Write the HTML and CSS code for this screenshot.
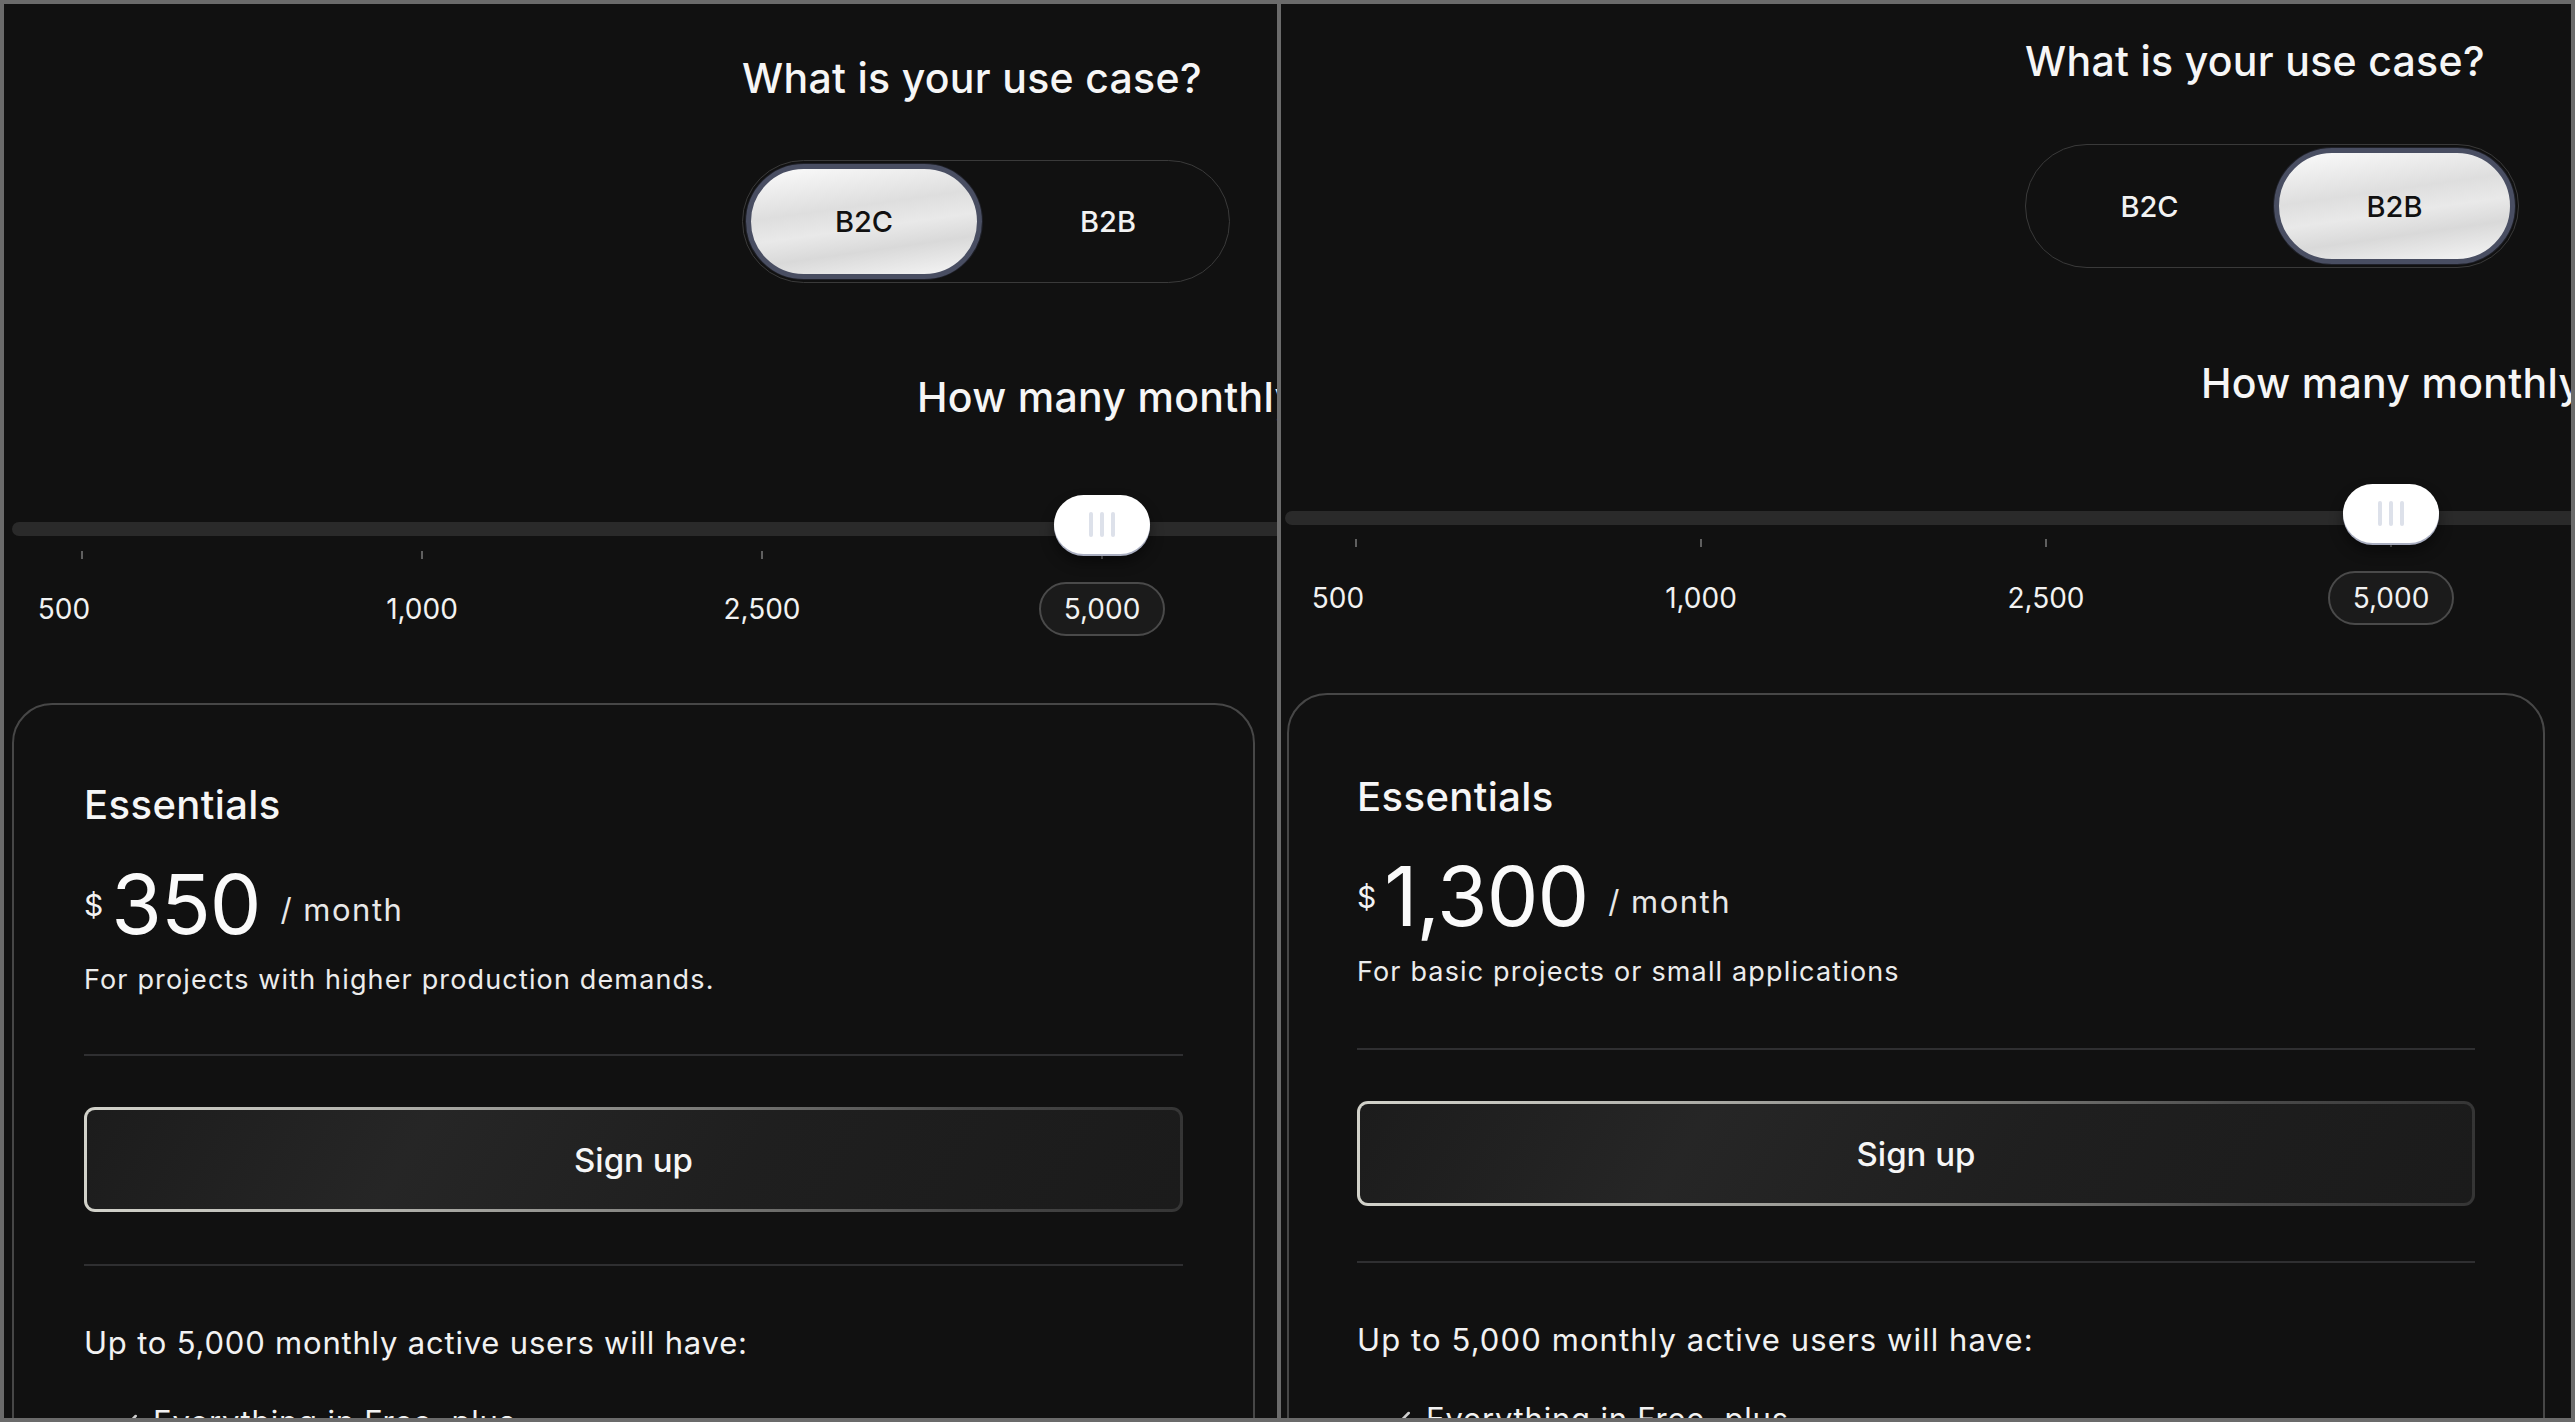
FILE: index.html
```html
<!DOCTYPE html>
<html lang="en">
<head>
<meta charset="utf-8">
<title>Pricing</title>
<link rel="stylesheet" href="styles.css">
</head>
<body>
<div class="frame">
  <section class="panel panel-b2c">
    <h2 class="question">What is your use case?</h2>
    <div class="toggle">
      <button class="seg is-active">B2C</button>
      <button class="seg">B2B</button>
    </div>
    <h2 class="question question-mau">How many monthly active users do you have?</h2>
    <div class="slider">
      <div class="track">
        <div class="thumb"><span></span><span></span><span></span></div>
      </div>
      <div class="ticks"><i></i><i></i><i></i><i></i><i></i></div>
      <div class="labels">
        <span class="lbl lbl-first">500</span>
        <span class="lbl">1,000</span>
        <span class="lbl">2,500</span>
        <span class="lbl lbl-current">5,000</span>
        <span class="lbl">10,000</span>
      </div>
    </div>
    <article class="card">
      <h3 class="plan">Essentials</h3>
      <div class="price">
        <span class="cur">$</span>
        <span class="amount">350</span>
        <span class="per">/ month</span>
      </div>
      <p class="desc">For projects with higher production demands.</p>
      <hr class="rule">
      <button class="signup">Sign up</button>
      <hr class="rule rule-2">
      <p class="includes">Up to 5,000 monthly active users will have:</p>
      <ul class="features">
        <li><svg class="check" viewBox="0 0 24 24"><path d="M4 12.5l5 5L20 6.5"/></svg>Everything in Free, plus</li>
        <li><svg class="check" viewBox="0 0 24 24"><path d="M4 12.5l5 5L20 6.5"/></svg>Custom domain</li>
      </ul>
    </article>
  </section>

  <section class="panel panel-b2b">
    <h2 class="question">What is your use case?</h2>
    <div class="toggle">
      <button class="seg">B2C</button>
      <button class="seg is-active">B2B</button>
    </div>
    <h2 class="question question-mau">How many monthly active users do you have?</h2>
    <div class="slider">
      <div class="track">
        <div class="thumb"><span></span><span></span><span></span></div>
      </div>
      <div class="ticks"><i></i><i></i><i></i><i></i><i></i></div>
      <div class="labels">
        <span class="lbl lbl-first">500</span>
        <span class="lbl">1,000</span>
        <span class="lbl">2,500</span>
        <span class="lbl lbl-current">5,000</span>
        <span class="lbl">10,000</span>
      </div>
    </div>
    <article class="card">
      <h3 class="plan">Essentials</h3>
      <div class="price">
        <span class="cur">$</span>
        <span class="amount">1,300</span>
        <span class="per">/ month</span>
      </div>
      <p class="desc">For basic projects or small applications</p>
      <hr class="rule">
      <button class="signup">Sign up</button>
      <hr class="rule rule-2">
      <p class="includes">Up to 5,000 monthly active users will have:</p>
      <ul class="features">
        <li><svg class="check" viewBox="0 0 24 24"><path d="M4 12.5l5 5L20 6.5"/></svg>Everything in Free, plus</li>
        <li><svg class="check" viewBox="0 0 24 24"><path d="M4 12.5l5 5L20 6.5"/></svg>Custom domain</li>
      </ul>
    </article>
  </section>
</div>
</body>
</html>
```

FILE: styles.css
```css
* { box-sizing: border-box; }

html, body {
  margin: 0;
  padding: 0;
  background: #6b6b6b;
}

body {
  font-family: Inter, "Liberation Sans", sans-serif;
  color: #f4f4f4;
}

.frame {
  display: flex;
  gap: 4px;
  padding: 4px;
  width: 2575px;
  height: 1422px;
}

.panel {
  position: relative;
  background: #111111;
  overflow: hidden;
  height: 100%;
  padding-top: var(--top);
}

.panel-b2c {
  flex: 0 0 1273px;
  --top: 49px;
  --q-left: 738px;
  --seg-w: 236px;
  --seg-h: 115px;
  --seg-gap: 8px;
  --g-toggle: 57px;
  --g-mau: 89px;
  --mau-left: 913px;
  --g-slider: 100px;
  --track-left: 8px;
  --t0: 70px;
  --step: 340px;
  --g-ticks: 15px;
  --g-labels: 23px;
  --g-card: 67px;
  --card-left: 8px;
  --card-w: 1243px;
  --card-pad: 70px;
  --card-top: 76px;
  --g-rule: 57px;
  --g-rule2: 52px;
  --inc-ls: 0.8px;
}

.panel-b2b {
  flex: 1 1 auto;
  --top: 32px;
  --q-left: 744px;
  --seg-w: 241px;
  --seg-h: 116px;
  --seg-gap: 4px;
  --g-toggle: 58px;
  --g-mau: 90px;
  --mau-left: 920px;
  --g-slider: 103px;
  --track-left: 4px;
  --t0: 71px;
  --step: 345px;
  --g-ticks: 14px;
  --g-labels: 24px;
  --g-card: 68px;
  --card-left: 6px;
  --card-w: 1258px;
  --card-pad: 68px;
  --card-top: 78px;
  --g-rule: 59px;
  --g-rule2: 55px;
  --inc-ls: 1.1px;
}

.question {
  margin: 0 0 0 var(--q-left);
  font-size: 41px;
  line-height: 50px;
  font-weight: 500;
  letter-spacing: 0.3px;
  white-space: nowrap;
  color: #f6f6f6;
}

.question-mau {
  margin-left: var(--mau-left);
  margin-top: var(--g-mau);
}

/* toggle */
.toggle {
  display: inline-flex;
  gap: var(--seg-gap);
  margin: var(--g-toggle) 0 0 var(--q-left);
  padding: 3px;
  border: 1px solid #3a3a3a;
  border-radius: 80px;
}

.seg {
  width: var(--seg-w);
  height: var(--seg-h);
  border: 5px solid transparent;
  border-radius: 70px;
  background: transparent;
  font-family: Inter, "Liberation Sans", sans-serif;
  font-size: 29px;
  font-weight: 500;
  color: #f2f2f2;
  padding: 0;
}

.seg.is-active {
  color: #111;
  border-color: #494e62;
  box-shadow: 0 0 0 1px #1f2028;
  background: linear-gradient(172deg, #fbfbfb 0%, #dedede 38%, #e9e9e9 55%, #d9d9d9 72%, #f6f6f6 100%);
}

/* slider */
.slider {
  margin: var(--g-slider) 0 0 var(--track-left);
  width: 2400px;
}

.track {
  position: relative;
  height: 14px;
  border-radius: 7px;
  background: #2a2a2a;
}

.thumb {
  position: absolute;
  top: -27px;
  left: calc(var(--t0) + 3 * var(--step) - 48px);
  width: 96px;
  height: 59px;
  border-radius: 30px;
  background: #ffffff;
  box-shadow: 0 2px 0 #a9aec0, 0 8px 14px rgba(0, 0, 0, 0.45);
  display: flex;
  align-items: center;
  justify-content: center;
  gap: 7px;
}

.thumb span {
  width: 4px;
  height: 25px;
  border-radius: 2px;
  background: #dde1ea;
}

.ticks {
  display: flex;
  gap: calc(var(--step) - 2px);
  margin-top: var(--g-ticks);
  padding-left: calc(var(--t0) - 1px);
}

.ticks i {
  width: 2px;
  height: 8px;
  background: #5f5f5f;
}

.labels {
  display: grid;
  grid-template-columns: repeat(5, var(--step));
  justify-items: center;
  align-items: center;
  height: 54px;
  margin: var(--g-labels) 0 0 calc(var(--t0) - var(--step) / 2);
}

.lbl {
  font-size: 28px;
  line-height: 34px;
  color: #f2f2f2;
}

.lbl-first {
  margin-right: 36px;
}

.lbl-current {
  height: 54px;
  line-height: 50px;
  padding: 0 23px;
  border: 2px solid #4a4a4a;
  border-radius: 27px;
  background: #1b1b1b;
}

/* card */
.card {
  margin: var(--g-card) 0 0 var(--card-left);
  width: var(--card-w);
  padding: var(--card-top) var(--card-pad) 0;
  border: 2px solid #474747;
  border-radius: 40px;
  height: 1000px;
}

.plan {
  margin: 0;
  font-size: 40px;
  line-height: 48px;
  font-weight: 500;
  letter-spacing: 0.4px;
  color: #f6f6f6;
}

.price {
  display: flex;
  align-items: center;
  height: 82px;
  margin-top: 35px;
}

.cur {
  font-size: 30px;
  line-height: 1;
  color: #f2f2f2;
}

.amount {
  margin-left: 8px;
  font-size: 82px;
  line-height: 82px;
  font-weight: 400;
  letter-spacing: -1px;
  color: #fafafa;
}

.per {
  margin: 8px 0 0 20px;
  font-size: 31px;
  line-height: 1;
  letter-spacing: 1.5px;
  color: #e8e8e8;
}

.desc {
  margin: 17px 0 0;
  font-size: 27px;
  line-height: 34px;
  letter-spacing: 1.15px;
  color: #ececec;
}

.rule {
  margin: var(--g-rule) 0 0;
  border: 0;
  height: 2px;
  background: #2f2f31;
}

.rule-2 {
  margin-top: var(--g-rule2);
}

.signup {
  display: block;
  width: 100%;
  height: 105px;
  margin-top: 51px;
  border: 3px solid transparent;
  border-radius: 11px;
  background:
    linear-gradient(120deg, #1c1c1c 0%, #262626 30%, #1f1f1f 60%, #1b1b1b 100%) padding-box,
    linear-gradient(90deg, #d2d2ca 0%, #b6b6b0 25%, #7d7d7a 55%, #4a4a4a 80%, #353535 100%) border-box;
  font-family: Inter, "Liberation Sans", sans-serif;
  font-size: 33px;
  font-weight: 500;
  color: #f6f6f6;
}

.includes {
  margin: 58px 0 0;
  font-size: 31px;
  line-height: 38px;
  letter-spacing: var(--inc-ls);
  color: #f2f2f2;
}

.features {
  list-style: none;
  margin: 41px 0 0;
  padding: 0;
}

.features li {
  display: flex;
  align-items: center;
  font-size: 31px;
  line-height: 38px;
  letter-spacing: 0.8px;
  color: #f2f2f2;
  margin-bottom: 24px;
}

.check {
  width: 26px;
  height: 26px;
  margin: 0 13px 0 30px;
  fill: none;
  stroke: #cfcfcf;
  stroke-width: 2.4;
  stroke-linecap: round;
  stroke-linejoin: round;
}
```
